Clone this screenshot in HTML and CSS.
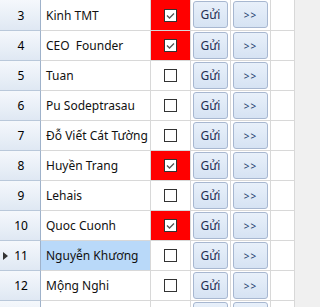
FILE: index.html
```html
<!DOCTYPE html>
<html>
<head>
<meta charset="utf-8">
<link rel="stylesheet" href="styles.css">
</head>
<body>
<div class="view">
  <div class="grid">
    <div class="row first">
      <div class="hdr">3</div><div class="name">Kinh TMT</div>
      <div class="chk red"><span class="box"><svg viewBox="0 0 11 11" width="11" height="11"><polyline points="2,5.5 4.5,8 9,3.5" fill="none" stroke="#555" stroke-width="1.3"/></svg></span></div>
      <div class="btnc"><button class="btn">Gửi</button></div><div class="btnc"><button class="btn arr">&gt;&gt;</button></div><div class="end"></div>
    </div>
    <div class="row">
      <div class="hdr">4</div><div class="name">CEO&nbsp; Founder</div>
      <div class="chk red"><span class="box"><svg viewBox="0 0 11 11" width="11" height="11"><polyline points="2,5.5 4.5,8 9,3.5" fill="none" stroke="#555" stroke-width="1.3"/></svg></span></div>
      <div class="btnc"><button class="btn">Gửi</button></div><div class="btnc"><button class="btn arr">&gt;&gt;</button></div><div class="end"></div>
    </div>
    <div class="row">
      <div class="hdr">5</div><div class="name">Tuan</div>
      <div class="chk"><span class="box"></span></div>
      <div class="btnc"><button class="btn">Gửi</button></div><div class="btnc"><button class="btn arr">&gt;&gt;</button></div><div class="end"></div>
    </div>
    <div class="row">
      <div class="hdr">6</div><div class="name">Pu Sodeptrasau</div>
      <div class="chk"><span class="box"></span></div>
      <div class="btnc"><button class="btn">Gửi</button></div><div class="btnc"><button class="btn arr">&gt;&gt;</button></div><div class="end"></div>
    </div>
    <div class="row">
      <div class="hdr">7</div><div class="name">Đỗ Viết Cát Tường</div>
      <div class="chk"><span class="box"></span></div>
      <div class="btnc"><button class="btn">Gửi</button></div><div class="btnc"><button class="btn arr">&gt;&gt;</button></div><div class="end"></div>
    </div>
    <div class="row">
      <div class="hdr">8</div><div class="name">Huyền Trang</div>
      <div class="chk red"><span class="box"><svg viewBox="0 0 11 11" width="11" height="11"><polyline points="2,5.5 4.5,8 9,3.5" fill="none" stroke="#555" stroke-width="1.3"/></svg></span></div>
      <div class="btnc"><button class="btn">Gửi</button></div><div class="btnc"><button class="btn arr">&gt;&gt;</button></div><div class="end"></div>
    </div>
    <div class="row">
      <div class="hdr">9</div><div class="name">Lehais</div>
      <div class="chk"><span class="box"></span></div>
      <div class="btnc"><button class="btn">Gửi</button></div><div class="btnc"><button class="btn arr">&gt;&gt;</button></div><div class="end"></div>
    </div>
    <div class="row">
      <div class="hdr">10</div><div class="name">Quoc Cuonh</div>
      <div class="chk red"><span class="box"><svg viewBox="0 0 11 11" width="11" height="11"><polyline points="2,5.5 4.5,8 9,3.5" fill="none" stroke="#555" stroke-width="1.3"/></svg></span></div>
      <div class="btnc"><button class="btn">Gửi</button></div><div class="btnc"><button class="btn arr">&gt;&gt;</button></div><div class="end"></div>
    </div>
    <div class="row">
      <div class="hdr current">11</div><div class="name sel">Nguyễn Khương</div>
      <div class="chk"><span class="box"></span></div>
      <div class="btnc"><button class="btn">Gửi</button></div><div class="btnc"><button class="btn arr">&gt;&gt;</button></div><div class="end"></div>
    </div>
    <div class="row">
      <div class="hdr">12</div><div class="name">Mộng Nghi</div>
      <div class="chk"><span class="box"></span></div>
      <div class="btnc"><button class="btn">Gửi</button></div><div class="btnc"><button class="btn arr">&gt;&gt;</button></div><div class="end"></div>
    </div>
    <div class="row">
      <div class="hdr"></div><div class="name"></div>
      <div class="chk"></div>
      <div class="btnc"><button class="btn" aria-label="Gửi"></button></div><div class="btnc"><button class="btn arr" aria-label="&gt;&gt;"></button></div><div class="end"></div>
    </div>
  </div>
</div>
</body>
</html>
```

FILE: styles.css
```css
html, body {
  margin: 0;
  padding: 0;
}
body {
  background: #f0f0f0;
  width: 309px;
  height: 307px;
  overflow: hidden;
  font-family: "Noto Sans", "Open Sans", "DejaVu Sans", sans-serif;
  font-size: 12px;
}
.view {
  height: 307px;
  overflow: hidden;
}
.grid {
  width: 295px;
  background: #fff;
}
.row {
  display: grid;
  grid-template-columns: 41px 110px 40px 40px 40px 24px;
  height: 30px;
}
.row.first {
  height: 31px;
}
.row > div {
  box-sizing: border-box;
  border-right: 1px solid #d8d8d8;
  border-bottom: 1px solid #d8d8d8;
}
.hdr {
  position: relative;
  display: flex;
  align-items: center;
  justify-content: center;
  padding-left: 2px;
  color: #000;
  background: linear-gradient(#f5f8fc, #dfe8f3);
  border-right: 1px solid #9fb2ca !important;
  border-bottom: 1px solid #b9c8da !important;
}
.hdr.current::before {
  content: "";
  position: absolute;
  left: 3px;
  top: 50%;
  margin-top: -4px;
  border-left: 5px solid #333;
  border-top: 4.5px solid transparent;
  border-bottom: 4.5px solid transparent;
}
.name {
  display: flex;
  align-items: center;
  padding-left: 5px;
  color: #111;
  white-space: nowrap;
  overflow: hidden;
}
.name.sel {
  background: #b9d9f9;
}
.chk {
  display: flex;
  align-items: center;
  justify-content: center;
}
.chk.red {
  background: #ff0000;
}
.box {
  box-sizing: border-box;
  width: 13px;
  height: 13px;
  border: 1px solid #333;
  background: #fff;
  display: flex;
  align-items: center;
  justify-content: center;
}
.box svg {
  display: block;
}
.btnc {
  padding: 1px 2px 1px 2px;
}
.btn {
  display: block;
  box-sizing: border-box;
  width: 35px;
  height: 27px;
  margin: 0;
  padding: 0;
  border: 1px solid #a7b7d0;
  border-radius: 3px;
  background: linear-gradient(#e8f0fa, #d6e3f3);
  font-family: "Noto Sans", "Open Sans", sans-serif;
  font-size: 12px;
  color: #1d2e52;
  line-height: 1;
}
.btn.arr {
  font-size: 10px;
  letter-spacing: 1px;
  color: #20406e;
}
.end {
  background: #fff;
}
```
